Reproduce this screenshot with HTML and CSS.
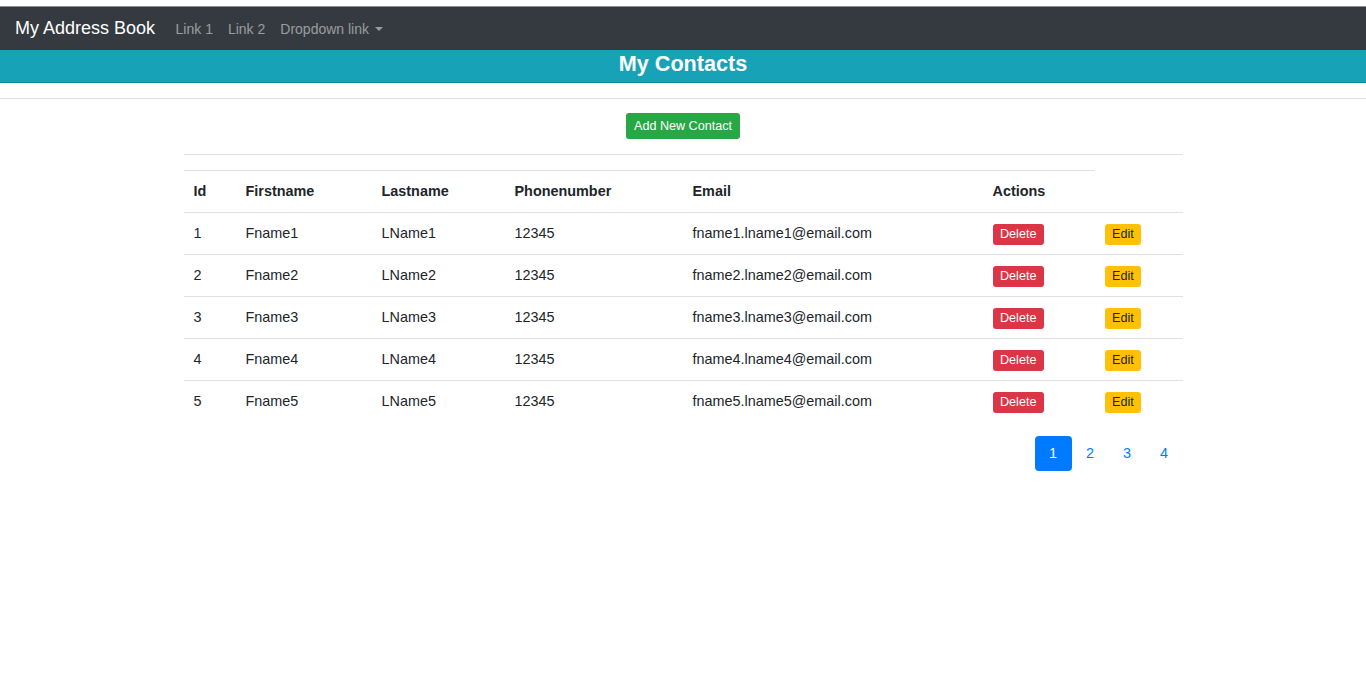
FILE: index.html
```html
<!DOCTYPE html>
<html lang="en">
<head>
<meta charset="utf-8">
<title>My Address Book</title>
<link rel="stylesheet" href="styles.css">
</head>
<body>
<div class="topstrip"></div>
<nav class="navbar">
  <a class="brand" href="#">My Address Book</a>
  <ul class="nav">
    <li><a class="nav-link" href="#">Link 1</a></li>
    <li><a class="nav-link" href="#">Link 2</a></li>
    <li><a class="nav-link dropdown" href="#">Dropdown link<span class="caret"></span></a></li>
  </ul>
</nav>
<header class="band">
  <h1 class="band-title">My Contacts</h1>
</header>
<div class="rule"></div>
<main class="container">
  <div class="top-actions">
    <button class="btn btn-success">Add New Contact</button>
  </div>
  <hr class="divider">
  <table class="contacts">
    <colgroup>
      <col class="c-id"><col class="c-first"><col class="c-last"><col class="c-phone"><col class="c-email"><col class="c-del"><col class="c-edit">
    </colgroup>
    <thead>
      <tr><th>Id</th><th>Firstname</th><th>Lastname</th><th>Phonenumber</th><th>Email</th><th>Actions</th></tr>
    </thead>
    <tbody>
      <tr><td>1</td><td>Fname1</td><td>LName1</td><td>12345</td><td>fname1.lname1@email.com</td><td><button class="btn-xs btn-danger">Delete</button></td><td><button class="btn-xs btn-warning">Edit</button></td></tr>
      <tr><td>2</td><td>Fname2</td><td>LName2</td><td>12345</td><td>fname2.lname2@email.com</td><td><button class="btn-xs btn-danger">Delete</button></td><td><button class="btn-xs btn-warning">Edit</button></td></tr>
      <tr><td>3</td><td>Fname3</td><td>LName3</td><td>12345</td><td>fname3.lname3@email.com</td><td><button class="btn-xs btn-danger">Delete</button></td><td><button class="btn-xs btn-warning">Edit</button></td></tr>
      <tr><td>4</td><td>Fname4</td><td>LName4</td><td>12345</td><td>fname4.lname4@email.com</td><td><button class="btn-xs btn-danger">Delete</button></td><td><button class="btn-xs btn-warning">Edit</button></td></tr>
      <tr><td>5</td><td>Fname5</td><td>LName5</td><td>12345</td><td>fname5.lname5@email.com</td><td><button class="btn-xs btn-danger">Delete</button></td><td><button class="btn-xs btn-warning">Edit</button></td></tr>
    </tbody>
  </table>
  <ul class="pagination">
    <li><a class="page-link active" href="#">1</a></li>
    <li><a class="page-link" href="#">2</a></li>
    <li><a class="page-link" href="#">3</a></li>
    <li><a class="page-link" href="#">4</a></li>
  </ul>
</main>
</body>
</html>
```
FILE: styles.css
```css
* { box-sizing: border-box; }
html, body { margin: 0; padding: 0; }
body {
  font-family: "Liberation Sans", Arial, sans-serif;
  font-size: 14.4px;
  color: #212529;
  background: #fff;
}
a { text-decoration: none; }

.topstrip { height: 6px; background: #fff; }

.navbar {
  height: 44px;
  border-top: 1px solid #8a8d90;
  background: #343a40;
  display: flex;
  align-items: center;
  padding: 0 15px;
}
.brand {
  color: #fff;
  font-size: 18px;
  line-height: 27px;
  margin-right: 13px;
}
.nav {
  list-style: none;
  margin: 0;
  padding: 0;
  display: flex;
}
.nav-link {
  display: flex;
  align-items: center;
  padding: 0 7.5px;
  color: rgba(255, 255, 255, 0.5);
  font-size: 14px;
  line-height: 20px;
}
.caret {
  display: inline-block;
  width: 0;
  height: 0;
  margin-left: 6px;
  border-top: 4.5px solid rgba(255, 255, 255, 0.5);
  border-left: 4.5px solid transparent;
  border-right: 4.5px solid transparent;
}

.band {
  height: 33px;
  background: #17a2b8;
  border-bottom: 1px solid #138a9c;
  text-align: center;
  padding-top: 1px;
}
.band-title {
  margin: 0;
  color: #fff;
  font-size: 21.6px;
  font-weight: 700;
  line-height: 25px;
}

.rule {
  margin-top: 15px;
  height: 1px;
  background: #dee2e6;
}

.container {
  width: 999px;
  margin: 0 auto;
  padding-top: 14px;
}
.top-actions {
  display: flex;
  justify-content: center;
}
.btn {
  border: none;
  font-family: inherit;
  font-size: 12.6px;
  line-height: 18px;
  padding: 4px 8px;
  border-radius: 3px;
  height: 26px;
  cursor: pointer;
}
.btn-success { background: #28a745; color: #fff; }

.divider {
  margin: 15px 0 15px;
  border: 0;
  border-top: 1px solid #dee2e6;
  height: 0;
}

.contacts {
  width: 999px;
  table-layout: fixed;
  border-collapse: collapse;
}
.c-id { width: 52px; }
.c-first { width: 136px; }
.c-last { width: 133px; }
.c-phone { width: 178px; }
.c-email { width: 300px; }
.c-del { width: 112px; }
.c-edit { width: 88px; }

.contacts th,
.contacts td {
  text-align: left;
  padding: 8px 10px 9px;
  line-height: 24px;
  border-top: 1px solid #dee2e6;
  vertical-align: middle;
}
.contacts th { font-weight: 700; }

.btn-xs {
  border: none;
  font-family: inherit;
  font-size: 12.6px;
  line-height: 19px;
  height: 21px;
  padding: 0 7.5px;
  border-radius: 3px;
  vertical-align: middle;
  cursor: pointer;
}
.btn-danger { background: #dc3545; color: #fff; }
.btn-warning { background: #ffc107; color: #212529; }

.pagination {
  list-style: none;
  margin: 14px 0 0;
  padding: 0;
  display: flex;
  justify-content: flex-end;
}
.page-link {
  display: block;
  width: 37px;
  height: 35px;
  line-height: 35px;
  text-align: center;
  color: #007bff;
  font-size: 14.4px;
  border-radius: 4px;
}
.page-link.active {
  background: #007bff;
  color: #fff;
}
```
